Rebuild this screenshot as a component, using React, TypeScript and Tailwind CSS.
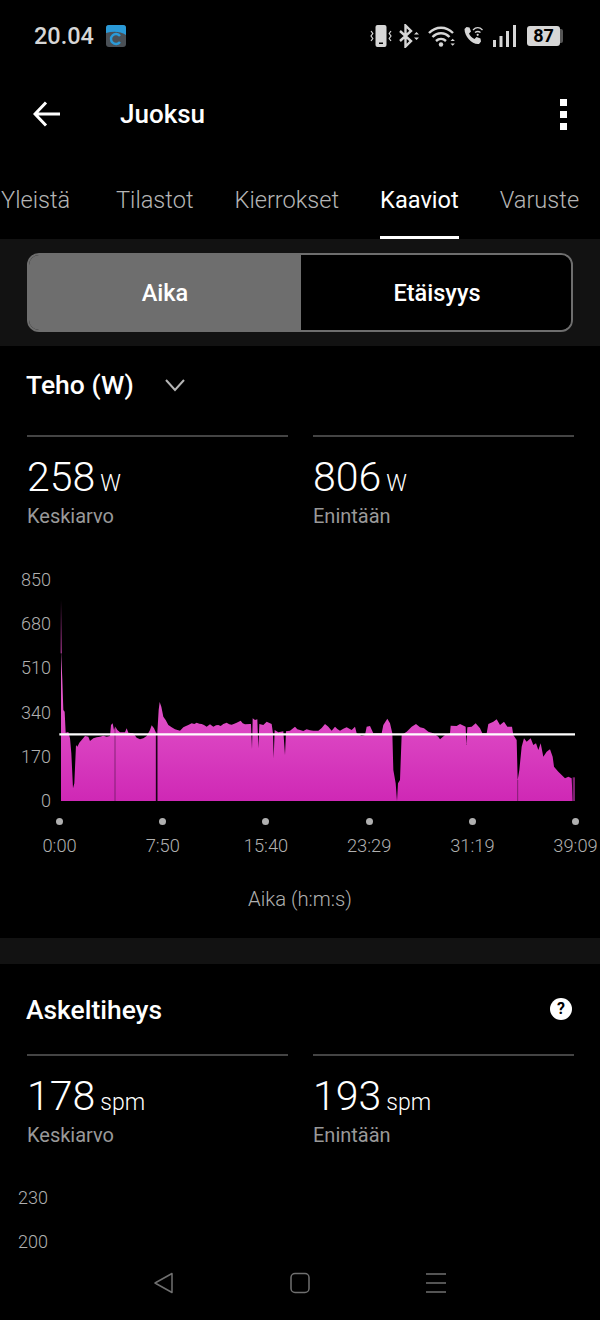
const top = [
  "183,693 183,240 187,330 190,420 194,425 197,488 205,486 210,505 214,550 219,655 223,640 228,525 232,530 238,518 245,510 255,498 265,500 270,513 280,505 290,502 300,500 310,497 320,500 330,498 333,465 338,460 342,480 346,470 352,480 360,487 375,487 380,475 385,488 400,490 410,503 420,508 430,505 440,498 450,480 455,466 462,475 468,488 472,488 476,420 479,396 484,410 490,440 497,450 505,465 515,472 525,478 540,482 550,472 558,468 565,465 575,460 583,462 590,458 598,461 605,462 612,465 620,470 630,463 640,470 648,466 655,465 662,468 670,462 680,458 688,463 695,464 703,461 710,458 722,452 728,460 735,463 750,462 753,462 756,538 758,445 765,450 772,448 775,535 778,462 790,465 800,455 815,462 819,490 821,565 824,480 835,487 850,484 855,555 858,484 870,482 885,470 892,478 900,480",
  "910,483 920,478 930,481 940,482 955,482 965,474 975,462 985,470 995,482 1005,470 1012,477 1020,482 1030,476 1040,472 1055,480 1065,470 1070,490 1085,498 1095,495 1100,470 1110,468 1120,490 1145,490 1150,465 1162,446 1170,460 1177,490 1180,600 1187,640 1191,693 1194,640 1200,630 1205,495 1220,485 1235,470 1248,462 1260,472 1272,475 1285,485 1300,490 1315,500 1320,508 1335,495 1350,490 1352,467 1370,468 1380,462 1397,470 1399,525 1402,472 1415,470 1427,460 1440,475 1447,490 1460,490 1465,462 1480,455 1490,448 1500,465 1512,455 1522,470 1536,470 1540,495 1550,510 1553,630 1558,600 1565,530 1572,505 1580,515 1592,505 1600,525 1608,520 1615,540 1622,520 1630,560 1640,545 1650,538 1658,560 1662,590 1675,605 1685,615 1695,625 1705,620 1715,625 1718,693",
].join(" ");

const yLabels = ["850", "680", "510", "340", "170", "0"];
const xLabels = ["0:00", "7:50", "15:40", "23:29", "31:19", "39:09"];

function Stat({ value, unit, label }: { value: string; unit: string; label: string }) {
  return (
    <div className="w-[261px] border-t-2 border-[#444] pt-[14px]">
      <div className="flex h-[52px] items-baseline gap-[5px] text-white">
        <span className="text-[41px] leading-[52px] font-light">{value}</span>
        <span className="text-[23px] font-light">{unit}</span>
      </div>
      <div className="text-[20px] leading-[26px] text-[#999]">{label}</div>
    </div>
  );
}

function StatusIcons() {
  return (
    <div className="flex items-center">
      <svg width="24" height="24" viewBox="0 0 24 24" className="mr-[5px]">
        <rect x="6.500" y="1" width="11" height="22" rx="2" fill="#d6d6d6" />
        <rect x="10" y="18.500" width="4" height="1.500" fill="#000" />
        <path d="M2 7l1.800 2.500L2 12l1.800 2.500L2 17M22 7l-1.800 2.500L22 12l-1.800 2.500L22 17" fill="none" stroke="#d6d6d6" strokeWidth="1.200" />
      </svg>
      <svg width="23" height="24" viewBox="0 0 23 24" className="mr-[7px]">
        <path d="M2 7l11 10-5.500 5.500V1.500L13 7 2 17" fill="none" stroke="#d6d6d6" strokeWidth="2.400" />
        <path d="M16 10.500l2.500-2.500 2.500 2.500zM16 13.500h5l-2.500 2.500z" fill="#d6d6d6" />
      </svg>
      <svg width="29" height="24" viewBox="0 0 29 24" className="mr-[6px]">
        <path d="M1 9c7-7 17-7 24 0M4.500 13c5-5 12-5 17 0M8 17c3-2.800 7-2.800 10 0" fill="none" stroke="#d6d6d6" strokeWidth="2.400" />
        <circle cx="13" cy="20.500" r="2.200" fill="#d6d6d6" />
        <path d="M22.500 17l2.200-2.200 2.200 2.200zM22.500 19.500h4.400l-2.200 2.200z" fill="#d6d6d6" />
      </svg>
      <svg width="21" height="24" viewBox="0 0 21 24" className="mr-[9px]">
        <path d="M3.500 3l3 .5 1.500 4-2 2c1 2.500 3 4.500 5.500 5.500l2-2 4 1.500.5 3-2 2.500C9.500 21 1.500 13 1.500 5z" fill="#d6d6d6" />
        <path d="M10 6c3-3 6.500-3 9.500 0M12 8.500c2-1.500 3.500-1.500 5.500 0" fill="none" stroke="#d6d6d6" strokeWidth="1.300" />
        <circle cx="14.700" cy="10.800" r="1.100" fill="#d6d6d6" />
      </svg>
      <svg width="23" height="24" viewBox="0 0 23 24" className="mr-[11px]">
        <rect x="0" y="16" width="3" height="7" fill="#d6d6d6" />
        <rect x="6.500" y="12" width="3" height="11" fill="#d6d6d6" />
        <rect x="13" y="7" width="3" height="16" fill="#d6d6d6" />
        <rect x="20" y="1" width="3" height="22" fill="#d6d6d6" />
      </svg>
      <div className="flex h-[20px] w-[33px] items-center justify-center rounded-[3px] bg-[#d6d6d6] text-[18px] leading-[20px] font-bold text-black">
        87
      </div>
      <div className="h-[14px] w-[3px] rounded-r-[2px] bg-[#555]" />
    </div>
  );
}

export default function App() {
  return (
    <div className="flex h-[1320px] w-[600px] flex-col overflow-hidden bg-black font-['Roboto',sans-serif]">
      {/* status bar */}
      <div className="flex h-[72px] shrink-0 items-center justify-between pr-[37px] pl-[34px]">
        <div className="flex items-center gap-[12px]">
          <span className="pt-[2px] text-[23.500px] font-medium text-[#d6d6d6]">20.04</span>
          <svg width="20" height="22" viewBox="0 0 20 22">
            <rect width="20" height="22" rx="3" fill="#4a5056" />
            <path d="M0 3a3 3 0 0 1 3-3h14a3 3 0 0 1 3 3v7C14 6 7 6 0 8z" fill="#2a9ad8" />
            <path d="M14 11a5 5 0 1 0 0 6" fill="none" stroke="#2a9ad8" strokeWidth="2.400" />
          </svg>
        </div>
        <StatusIcons />
      </div>

      {/* header */}
      <div className="flex h-[84px] shrink-0 items-center justify-between pr-[33px] pl-[33px]">
        <div className="flex items-center gap-[59px]">
          <svg width="28" height="28" viewBox="0 0 28 28" fill="none" stroke="#fff" strokeWidth="3">
            <path d="M27 14H2M13 2.500L2 14l11 11.500" />
          </svg>
          <span className="text-[26px] font-medium text-white">Juoksu</span>
        </div>
        <div className="flex flex-col gap-[5px]">
          <div className="h-[7px] w-[7px] bg-white" />
          <div className="h-[7px] w-[7px] bg-white" />
          <div className="h-[7px] w-[7px] bg-white" />
        </div>
      </div>

      {/* tabs */}
      <div className="flex h-[83px] shrink-0 gap-[41px] overflow-hidden pt-[7px] pl-[1px] text-[23.600px] font-light text-[#b5b5b5]">
        <div className="flex w-[74px] shrink-0 items-center">Yleistä</div>
        <div className="flex shrink-0 items-center">Tilastot</div>
        <div className="flex shrink-0 items-center">Kierrokset</div>
        <div className="flex shrink-0 items-center border-b-[3px] border-white pt-[3px] font-normal text-white">Kaaviot</div>
        <div className="flex shrink-0 items-center">Varuste</div>
      </div>

      {/* segment */}
      <div className="h-[107px] shrink-0 bg-[#121212] px-[27px] pt-[14px]">
        <div className="flex h-[79px] overflow-hidden rounded-[12px] border-2 border-[#6e6e6e] text-[23.500px] font-medium text-white">
          <div className="flex w-[272px] items-center justify-center bg-[#6e6e6e] pt-[2px]">Aika</div>
          <div className="flex flex-1 items-center justify-center bg-black pt-[2px] pl-[2px]">Etäisyys</div>
        </div>
      </div>

      {/* power chart */}
      <div className="h-[592px] shrink-0">
        <div className="flex h-[79px] items-center gap-[30px] pb-[1px] pl-[26px] text-[26.500px] font-medium text-white">
          <span>Teho (W)</span>
          <svg width="22" height="14" viewBox="0 0 22 14" fill="none" stroke="#b5b5b5" strokeWidth="2">
            <path d="M2 2l9 10 9-10" />
          </svg>
        </div>
        <div className="mt-[10px] flex justify-between pr-[26px] pl-[27px]">
          <Stat value="258" unit="W" label="Keskiarvo" />
          <Stat value="806" unit="W" label="Enintään" />
        </div>
        <div className="mt-[41px] flex text-[18px] leading-[20px] font-light text-[#b0b0b0]">
          <div className="flex h-[241px] w-[51px] flex-col justify-between text-right">
            {yLabels.map((l) => (
              <div key={l}>{l}</div>
            ))}
          </div>
          <svg width="517" height="235" viewBox="177 0 1551 705" className="ml-[8px] overflow-visible">
            <defs>
              <linearGradient id="power" x1="0" y1="0" x2="0" y2="1">
                <stop offset="0" stopColor="#ea68d2" />
                <stop offset="1" stopColor="#cf28b5" />
              </linearGradient>
              <linearGradient id="spike" gradientUnits="userSpaceOnUse" x1="0" y1="90" x2="0" y2="250">
                <stop offset="0" stopColor="#000" />
                <stop offset="1" stopColor="#c940ad" />
              </linearGradient>
            </defs>
            <rect x="182" y="90" width="3" height="160" fill="url(#spike)" />
            <polygon points={top} fill="url(#power)" />
            <rect x="1718" y="622" width="7" height="71" fill="#7c1f70" />
            <path d="M345 470V693M1553 630V693" stroke="#5c1852" strokeWidth="2" />
            <path d="M470 488V693" stroke="#1a0416" strokeWidth="5" />
            <path d="M178 493H1725" stroke="#fff" strokeWidth="7" />
          </svg>
        </div>
        <div className="mt-[7px] flex pl-[8px] text-[#b0b0b0]">
          {xLabels.map((l) => (
            <div key={l} className="flex w-[103.200px] shrink-0 flex-col items-center">
              <div className="h-[7px] w-[7px] rounded-full bg-[#b0b0b0]" />
              <div className="mt-[9px] text-[18.300px] leading-[24px] font-light whitespace-nowrap">{l}</div>
            </div>
          ))}
        </div>
        <div className="mt-[29px] text-center text-[20.300px] leading-[24px] font-light text-[#b0b0b0]">Aika (h:m:s)</div>
      </div>

      <div className="h-[26px] shrink-0 bg-[#121212]" />

      {/* cadence, cut off by the nav bar */}
      <div className="flex-1 overflow-hidden">
        <div className="flex h-[90px] items-center justify-between pr-[28px] pl-[26px]">
          <span className="pt-[3px] text-[26.400px] font-medium text-white">Askeltiheys</span>
          <div className="flex h-[22px] w-[22px] items-center justify-center rounded-full bg-white text-[16px] font-bold text-black">?</div>
        </div>
        <div className="flex justify-between pr-[26px] pl-[27px]">
          <Stat value="178" unit="spm" label="Keskiarvo" />
          <Stat value="193" unit="spm" label="Enintään" />
        </div>
        <div className="mt-[28px] w-[48px] text-right text-[18px] leading-[44px] font-light text-[#b0b0b0]">
          <div>230</div>
          <div>200</div>
        </div>
      </div>

      {/* nav bar */}
      <div className="flex h-[72px] shrink-0 items-center justify-center gap-[112px] pb-[2px]">
        <svg width="24" height="24" viewBox="0 0 24 24" fill="none" stroke="#707070" strokeWidth="1.500" strokeLinejoin="round">
          <path d="M20 2.500v19L3 12z" />
        </svg>
        <svg width="24" height="24" viewBox="0 0 24 24" fill="none" stroke="#707070" strokeWidth="1.500">
          <rect x="3" y="2.500" width="18" height="19" rx="4" />
        </svg>
        <svg width="24" height="24" viewBox="0 0 24 24" fill="none" stroke="#707070" strokeWidth="1.500">
          <path d="M2 3h20M2 12h20M2 21h20" />
        </svg>
      </div>
    </div>
  );
}
